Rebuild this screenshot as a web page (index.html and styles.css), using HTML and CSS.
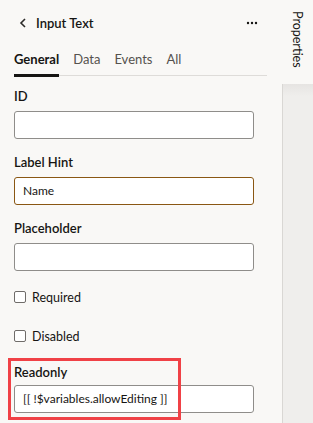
FILE: index.html
```html
<!DOCTYPE html>
<html>
<head>
<meta charset="utf-8">
<link rel="stylesheet" href="styles.css">
</head>
<body>
<div class="app">
  <div class="panel">
    <div class="header">
      <svg class="back" width="8" height="10" viewBox="0 0 8 10"><path d="M6 1 L2 5 L6 9" fill="none" stroke="#2b2a28" stroke-width="1.6"/></svg>
      <span class="title">Input Text</span>
      <span class="more">
        <svg width="12" height="4" viewBox="0 0 12 4"><circle cx="2" cy="2" r="1.2" fill="#161513"/><circle cx="6" cy="2" r="1.2" fill="#161513"/><circle cx="10" cy="2" r="1.2" fill="#161513"/></svg>
      </span>
    </div>
    <div class="tabs">
      <span class="tab active">General</span>
      <span class="tab">Data</span>
      <span class="tab">Events</span>
      <span class="tab">All</span>
    </div>
    <div class="form">
      <div class="field">
        <label class="label">ID</label>
        <div class="input"></div>
      </div>
      <div class="field">
        <label class="label">Label Hint</label>
        <div class="input focused">Name</div>
      </div>
      <div class="field">
        <label class="label">Placeholder</label>
        <div class="input"></div>
      </div>
      <div class="check first"><span class="box"></span>Required</div>
      <div class="check last"><span class="box"></span>Disabled</div>
      <div class="field readonly">
        <label class="label">Readonly</label>
        <div class="input">[[ !$variables.allowEditing ]]</div>
        <div class="highlight"></div>
      </div>
    </div>
  </div>
  <div class="side">
    <div class="side-tab"><span class="vert">Properties</span></div>
    <div class="side-body"></div>
  </div>
</div>
</body>
</html>
```
FILE: styles.css
```css
* { box-sizing: border-box; }
html, body {
  margin: 0;
  padding: 0;
  height: 100%;
}
body {
  background: #f9f8f6;
  font-family: Lato, "Noto Sans", sans-serif;
  color: #161513;
  font-size: 13px;
  overflow: hidden;
}
.app {
  display: flex;
  height: 423px;
}
.panel {
  width: 282px;
  padding: 0 15px 0 14px;
}
.header {
  display: flex;
  align-items: center;
  height: 46px;
  padding-left: 5px;
}
.back { margin-right: 9px; }
.title {
  font-size: 13px;
  font-weight: 600;
}
.more {
  margin-left: auto;
  margin-right: 9px;
  display: flex;
}
.tabs {
  display: flex;
  gap: 14px;
  height: 30px;
  border-bottom: 1px solid #dedcd9;
  align-items: center;
  font-size: 13px;
  color: #55524e;
}
.tab {
  position: relative;
  height: 30px;
  line-height: 26px;
}
.tab.active {
  color: #161513;
  font-weight: 700;
}
.tab.active::after {
  content: "";
  position: absolute;
  left: 0;
  right: 0;
  bottom: -1px;
  height: 3px;
  background: #161513;
}
.form {
  padding-top: 11px;
  padding-right: 13px;
}
.field {
  position: relative;
  margin-bottom: 14px;
}
.label {
  display: block;
  font-weight: 600;
  font-size: 13px;
  line-height: 18px;
  margin-bottom: 6px;
}
.input {
  height: 28px;
  background: #fff;
  border: 1px solid #8f8d8a;
  border-radius: 3px;
  padding: 0 8px;
  line-height: 26px;
  font-size: 12px;
}
.input.focused {
  border-color: #8a5713;
}
.check {
  display: flex;
  align-items: center;
  height: 20px;
  font-size: 12.5px;
}
.check.first {
  margin-top: 16px;
  margin-bottom: 19px;
}
.check.last {
  margin-bottom: 17px;
}
.box {
  width: 12px;
  height: 12px;
  border: 1px solid #6f6c69;
  border-radius: 2px;
  background: #fff;
  margin-right: 6px;
}
.readonly .label { margin-bottom: 4px; }
.highlight {
  position: absolute;
  left: -6px;
  top: -5px;
  width: 173px;
  height: 62px;
  border: 3px solid #f04146;
}
.side {
  width: 31px;
  display: flex;
  flex-direction: column;
}
.side-tab {
  height: 84px;
  display: flex;
  justify-content: center;
  padding-top: 11px;
}
.vert {
  writing-mode: vertical-rl;
  font-size: 12.5px;
  color: #161513;
}
.side-body {
  flex: 1;
  background: linear-gradient(#e6e4e2, #efeeec 12px);
  border-left: 1px solid #d9d7d4;
}
```
